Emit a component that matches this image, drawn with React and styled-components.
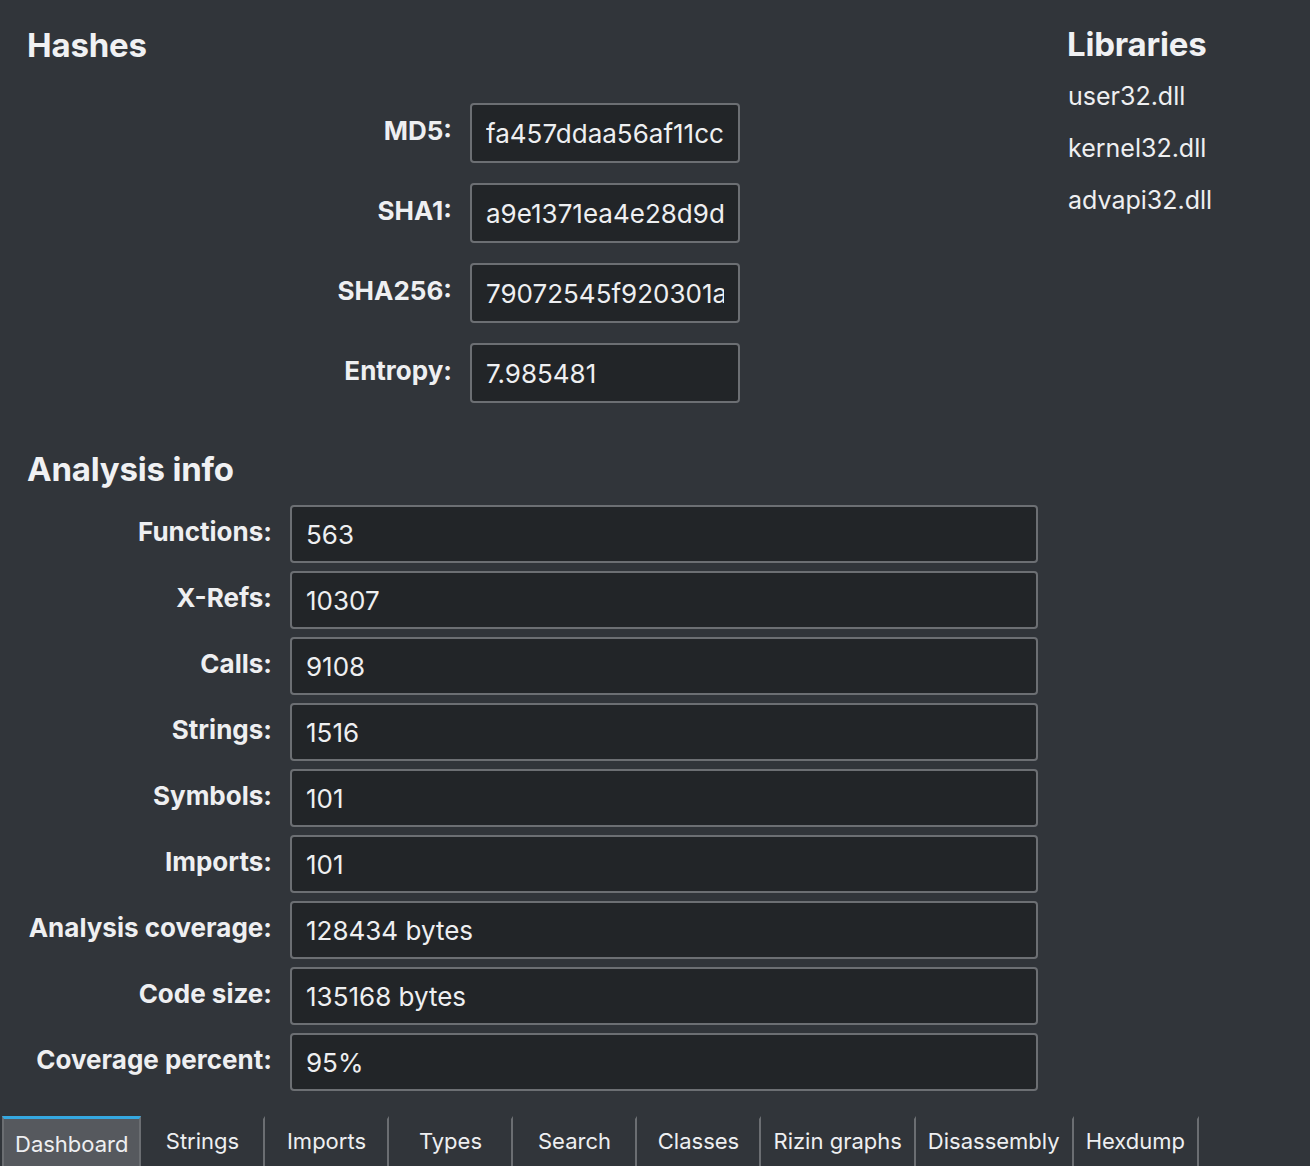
import React from "react";
import styled, { createGlobalStyle } from "styled-components";

const GlobalStyle = createGlobalStyle`
  html, body {
    margin: 0;
    padding: 0;
    background: #31353a;
  }
  body {
    font-family: Inter, "Noto Sans", "Liberation Sans", sans-serif;
    color: #eeeff1;
  }
`;

const hashes = [
  { label: "MD5:", value: "fa457ddaa56af11ccc0b4a3e2d9f7e12" },
  { label: "SHA1:", value: "a9e1371ea4e28d9dc34a6b0f12e7" },
  { label: "SHA256:", value: "79072545f920301a8ce1b6d44a2f" },
  { label: "Entropy:", value: "7.985481" },
];

const analysis = [
  { label: "Functions:", value: "563" },
  { label: "X-Refs:", value: "10307" },
  { label: "Calls:", value: "9108" },
  { label: "Strings:", value: "1516" },
  { label: "Symbols:", value: "101" },
  { label: "Imports:", value: "101" },
  { label: "Analysis coverage:", value: "128434 bytes" },
  { label: "Code size:", value: "135168 bytes" },
  { label: "Coverage percent:", value: "95%" },
];

const libraries = ["user32.dll", "kernel32.dll", "advapi32.dll"];

const tabs = [
  "Dashboard",
  "Strings",
  "Imports",
  "Types",
  "Search",
  "Classes",
  "Rizin graphs",
  "Disassembly",
  "Hexdump",
];

const App = () => {
  const [activeTab, setActiveTab] = React.useState(0);

  return (
    <Page>
      <GlobalStyle />
      <Content>
        <MainColumn>
          <Heading>Hashes</Heading>
          <Form labelWidth={425} fieldWidth={270} rowGap={20} top={38}>
            {hashes.map((h) => (
              <React.Fragment key={h.label}>
                <Label>{h.label}</Label>
                <Field height={60} readOnly value={h.value} />
              </React.Fragment>
            ))}
          </Form>

          <Heading top={46}>Analysis info</Heading>
          <Form labelWidth={245} fieldWidth={748} rowGap={8} top={16}>
            {analysis.map((a) => (
              <React.Fragment key={a.label}>
                <Label>{a.label}</Label>
                <Field height={58} readOnly value={a.value} />
              </React.Fragment>
            ))}
          </Form>
        </MainColumn>

        <SideColumn>
          <Heading>Libraries</Heading>
          <LibraryList>
            {libraries.map((l) => (
              <LibraryItem key={l}>{l}</LibraryItem>
            ))}
          </LibraryList>
        </SideColumn>
      </Content>

      <TabBar>
        {tabs.map((t, i) => (
          <Tab key={t} active={i === activeTab} onClick={() => setActiveTab(i)}>
            {t}
          </Tab>
        ))}
      </TabBar>
    </Page>
  );
};

export default App;

const Page = styled.div`
  width: 1310px;
  height: 1166px;
  display: flex;
  flex-direction: column;
  background: #31353a;
  overflow: hidden;
`;
const Content = styled.div`
  flex: 1;
  display: grid;
  grid-template-columns: 1040px 1fr;
  padding: 0 0 0 27px;
`;
const MainColumn = styled.div`
  display: flex;
  flex-direction: column;
  padding-top: 25px;
`;
const SideColumn = styled.div`
  display: flex;
  flex-direction: column;
  padding-top: 24px;
`;
const Heading = styled.h2`
  margin: ${(p) => p.top || 0}px 0 0 0;
  font-size: 33px;
  font-weight: 700;
  line-height: 40px;
  color: #f0f1f3;
  letter-spacing: -0.2px;
`;
const Form = styled.div`
  display: grid;
  grid-template-columns: ${(p) => p.labelWidth}px ${(p) => p.fieldWidth}px;
  column-gap: 18px;
  row-gap: ${(p) => p.rowGap}px;
  margin-top: ${(p) => p.top}px;
  align-items: center;
`;
const Label = styled.div`
  text-align: right;
  font-size: 26px;
  font-weight: 700;
  padding-bottom: 5px;
  color: #eeeff1;
  white-space: nowrap;
`;
const Field = styled.input`
  box-sizing: border-box;
  height: ${(p) => p.height}px;
  width: 100%;
  background: #222528;
  border: 2px solid #6c6f73;
  border-radius: 4px;
  padding: 0 14px;
  font-family: Inter, "Noto Sans", "Liberation Sans", sans-serif;
  font-size: 26px;
  color: #eeeff1;
  outline: none;
`;
const LibraryList = styled.div`
  display: flex;
  flex-direction: column;
  margin-top: 6px;
`;
const LibraryItem = styled.div`
  font-size: 25px;
  line-height: 52px;
  padding-left: 1px;
  color: #eeeff1;
`;
const TabBar = styled.div`
  display: flex;
  flex-direction: row;
  align-items: stretch;
  height: 50px;
  padding-left: 2px;
`;
const Tab = styled.div`
  box-sizing: border-box;
  min-width: 124px;
  padding: ${(p) => (p.active ? "2px 11px 0" : "0 12px 3px")};
  display: flex;
  align-items: center;
  justify-content: center;
  font-size: 22px;
  color: #eeeff1;
  cursor: pointer;
  border-right: 2px solid #6b6e72;
  background: ${(p) => (p.active ? "#56595e" : "transparent")};
  border-top: 3px solid ${(p) => (p.active ? "#35a8e0" : "transparent")};
  border-left: ${(p) => (p.active ? "2px solid #6b6e72" : "none")};
`;
